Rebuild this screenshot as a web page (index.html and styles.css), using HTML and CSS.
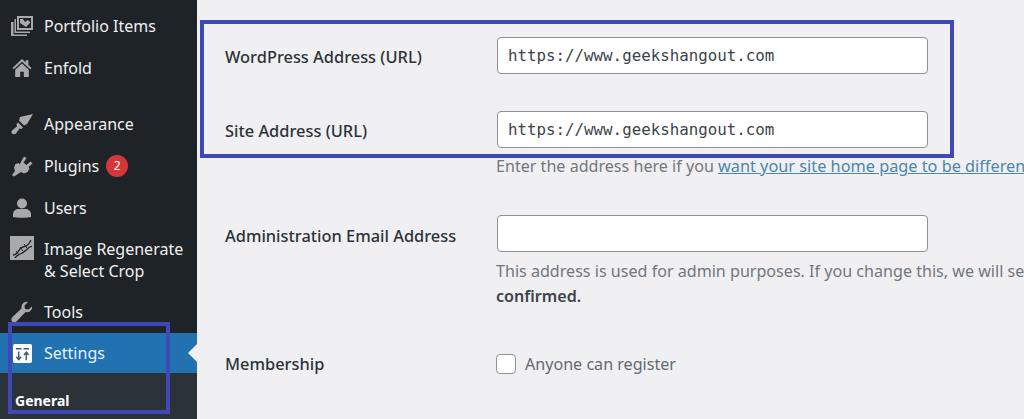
FILE: index.html
```html
<!DOCTYPE html>
<html>
<head>
    <title>General Settings</title>
    <link rel="stylesheet" href="styles.css">
</head>
<body>
    <div class="page">
        <div class="sidebar">
            <div class="menu-item">
                <svg class="icon" viewBox="0 0 22 22"><path d="M6 1h16v14H6z"/><path d="M8 3v10h12V3z" fill="#1d2327"/><path d="M9 4h3l2 3 3-2 2 2v1l-4 4-6-4z"/><path d="M3.500 4H5v12.500h14V18H3.500z"/><path d="M0 7h2.500v12.500H16V21H0z"/></svg>
                <span>Portfolio Items</span>
            </div>
            <div class="menu-item">
                <svg class="icon home" viewBox="0 0 22 22"><path d="M11 1 0.5 11l1.500 1.300L11 4l9 8.300 1.500-1.300-3.500-3.300V2.500h-3v2.400z"/><path d="M3.500 13 11 6l7.500 7v8H13v-6H9v6H3.500z"/></svg>
                <span>Enfold</span>
            </div>
            <div class="menu-item sep">
                <svg class="icon" viewBox="0 0 22 22"><path d="M9 4 22 1l-6 10-3 1.500-5-5z"/><path d="M7 9.500l5 5-1.500 1.500-2-.5-3.500 5c-1 1-3 1-4 0s-.5-2.500.5-3.500l4.500-3.500-.5-2.500z"/></svg>
                <span>Appearance</span>
            </div>
            <div class="menu-item">
                <svg class="icon" viewBox="0 0 22 22"><path d="M13 1.500l2.500 1.500-3 4.500 3 2.500 4-3.500 2 2-4 3.500 1 1.500-2 3.500-3.500 1.500-3-1.500L3 21.500l-2-1.500 3-4-1-3.500L4.500 9l3-1 1 1.500z"/></svg>
                <span>Plugins</span>
                <span class="badge">2</span>
            </div>
            <div class="menu-item short">
                <svg class="icon" viewBox="0 0 22 22"><circle cx="11" cy="6.500" r="5"/><path d="M2 20v-3c0-3 3-5 5.500-5h7c2.500 0 5.500 2 5.500 5v3c-3 1-15 1-18 0z"/></svg>
                <span>Users</span>
            </div>
            <div class="menu-item tall">
                <svg class="icon wide" viewBox="0 0 24 24"><path d="M0 0h24v24H0z"/><path d="M3 19C9 19 8 12 13 11s6-3 8-7M5 22c2-4 7-4 10-7s4-4 7-5" stroke="#1d2327" stroke-width="1.300" fill="none"/><path d="M6 15l3 4M10 11l3 4M14 8l3 4" stroke="#1d2327" stroke-width="1" fill="none"/></svg>
                <span>Image Regenerate<br>&amp; Select Crop</span>
            </div>
            <div class="menu-item">
                <svg class="icon" viewBox="0 0 22 22"><path d="M21 5.500c.5 3-2 6.500-6.500 5.500L6 20c-1.500 1.500-4 1.500-5 .5S0 17 2 15.500l8.500-8C10 3 13.500 0 17 1l-3.500 3.500.5 3.500 3.500.5z"/></svg>
                <span>Tools</span>
            </div>
            <div class="menu-item current">
                <svg class="icon box" viewBox="0 0 20 20"><rect width="20" height="20" rx="2"/><path d="M6 8v8M3.500 13.500 6 16.500l2.500-3M14 9v8M11.500 11.500l2.500-3 2.500 3M11 5h6M3 5h6" stroke="#3a5a7a" stroke-width="1.500" fill="none"/></svg>
                <span>Settings</span>
            </div>
            <div class="submenu">General</div>
        </div>

        <div class="main">
            <div class="row first">
                <label class="field-label">WordPress Address (URL)</label>
                <input type="text" class="field" value="https://www.geekshangout.com">
            </div>
            <div class="row">
                <label class="field-label">Site Address (URL)</label>
                <input type="text" class="field" value="https://www.geekshangout.com">
            </div>
            <p class="desc">Enter the address here if you <a href="#">want your site home page to be different</a> from your WordPress installation directory.</p>

            <div class="row admin">
                <label class="field-label">Administration Email Address</label>
                <input type="text" class="field">
            </div>
            <p class="desc tight">This address is used for admin purposes. If you change this, we will send you an email at your new address to confirm it.<br><strong>confirmed.</strong></p>

            <div class="row member">
                <label class="field-label">Membership</label>
                <label class="check"><input type="checkbox"> Anyone can register</label>
            </div>
        </div>
    </div>

    <div class="frame frame-fields"></div>
    <div class="frame frame-menu"></div>
</body>
</html>
```

FILE: styles.css
```css
html, body { margin: 0; height: 419px; overflow: hidden; }
body { font-family: "Noto Sans", "Open Sans", sans-serif; font-size: 16px; background: #f0f0f3; color: #3c434a; position: relative; }
.page { display: flex; height: 419px; }

.sidebar { width: 197px; flex-shrink: 0; background: #1d2327; color: #f0f0f1; padding-top: 5px; box-sizing: border-box; }
.menu-item { display: flex; align-items: center; height: 42px; padding-left: 11px; position: relative; line-height: 22px; }
.menu-item.sep { margin-top: 14px; }
.menu-item.short { height: 41px; }
.menu-item.tall { height: 63px; }
.icon { width: 22px; height: 22px; margin-right: 11px; flex-shrink: 0; fill: #a7aaad; }
.icon.home { width: 20px; margin: 0 12px 0 1px; }
.icon.wide { width: 24px; height: 24px; margin: -24px 10px 0 -1px; }
.icon.box { width: 19px; height: 19px; margin: 0 12px 0 2px; }
.badge { width: 22px; height: 22px; border-radius: 50%; background: #d63638; color: #fff; font-size: 12px; text-align: center; margin-left: 7px; }
.current { height: 40px; background: #2271b1; color: #e3f3fd; }
.current .icon { fill: #fff; }
.current::after { content: ""; position: absolute; right: 0; top: 11px; border: 9px solid transparent; border-right-color: #f0f0f3; border-left: 0; }
.submenu { background: #2c3338; color: #fff; font-weight: 700; font-size: 14px; height: 46px; padding: 18px 0 0 15px; box-sizing: border-box; line-height: 20px; }

.main { flex: 1; min-width: 0; padding-left: 28px; overflow: hidden; white-space: nowrap; }
.row { display: flex; align-items: center; height: 37px; }
.row.first { margin-top: 37px; margin-bottom: 37px; }
.row.admin { margin-top: 36px; }
.row.member { margin-top: 45px; height: 20px; }
.field-label { width: 272px; flex-shrink: 0; font-weight: 500; font-size: 16.4px; color: #2c3338; padding-top: 2px; }
.row.admin .field-label { padding-top: 0; margin-top: 3px; }
.row.member .field-label { padding-top: 0; margin-top: -2px; }
.field { width: 431px; height: 37px; box-sizing: border-box; border: 1px solid #8c8f94; border-radius: 4px; background: #fff; padding: 0 10px; font-family: "DejaVu Sans Mono", monospace; font-size: 15.8px; color: #3c434a; outline: none; }
.desc { margin: 6px 0 0 271px; line-height: 25px; color: #72777c; height: 25px; font-size: 16.1px; }
.desc a { color: #4a86ad; font-size: 16.3px; }
.desc.tight { height: 50px; margin-top: 7px; }
.desc strong { font-weight: 600; color: #3c434a; }
.check { display: flex; align-items: center; color: #646970; font-size: 16.1px; }
.check input { width: 20px; height: 20px; margin: 0 9px 0 -1px; appearance: none; background: #fff; border: 1px solid #8c8f94; border-radius: 4px; box-sizing: border-box; }

/* annotation boxes drawn over the screenshot */
.frame { position: absolute; border: 4px solid #3f48b5; box-sizing: border-box; }
.frame-fields { left: 200px; top: 20px; width: 754px; height: 138px; }
.frame-menu { left: 8px; top: 322px; width: 162px; height: 92px; }
```
